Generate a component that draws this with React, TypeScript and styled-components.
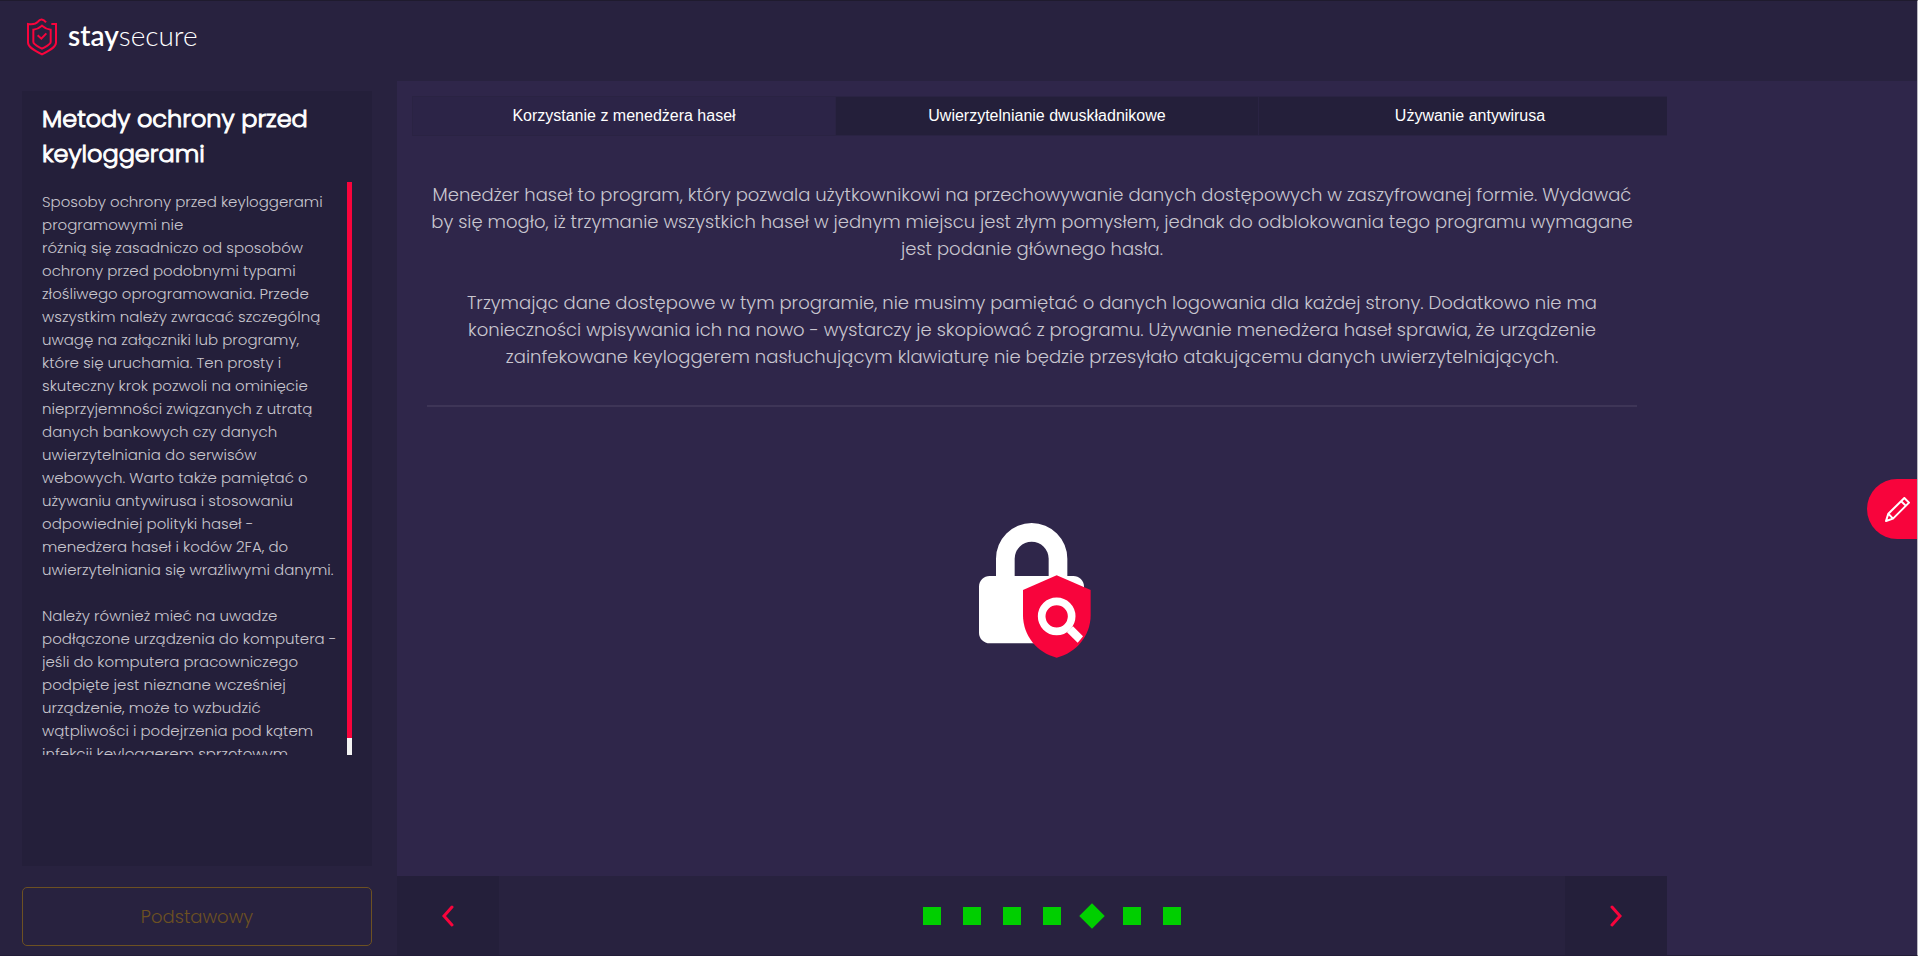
import React from 'react';
import styled, { createGlobalStyle } from 'styled-components';

const GlobalStyle = createGlobalStyle`
  *, *::before, *::after { box-sizing: border-box; }
  body { margin: 0; background: #2f264a; }
  button, ul, h1, h2, p { margin: 0; }
`;

const bodyFont = `Poppins, Inter, "Open Sans", sans-serif`;

const Page = styled.div`
  display: flex;
  flex-direction: column;
  height: 100vh;
  overflow: hidden;
  border-top: 1px solid #1f1b2e;
  border-right: 1px solid #b9b8c0;
  border-bottom: 1px solid #221c38;
  font-family: ${bodyFont};
  color: #fff;
`;

const Header = styled.header`
  flex: 0 0 80px;
  padding: 17px 26px;
  background: #28223f;
`;

const Brand = styled.a`
  display: inline-flex;
  align-items: flex-start;
  gap: 10px;
  color: #fff;
  text-decoration: none;
  font: 300 28px/34px Lato, sans-serif;

  b { font-weight: 600; }
`;

const Body = styled.div`
  flex: 1;
  display: flex;
  min-height: 0;
`;

const Sidebar = styled.aside`
  flex: 0 0 397px;
  display: flex;
  flex-direction: column;
  gap: 21px;
  padding: 10px 25px 9px 22px;
  background: #28223f;
`;

const Card = styled.section`
  flex: 1;
  min-height: 0;
  padding: 10px 20px 111px;
  background: #241f3a;
  display: flex;
  flex-direction: column;
  gap: 11px;
`;

const Title = styled.h1`
  font-size: 24px;
  line-height: 35px;
  font-weight: 300;
  -webkit-text-stroke: 1px #fff;
`;

const Scroller = styled.div`
  flex: 1;
  min-height: 0;
  display: flex;
  justify-content: space-between;
  overflow: hidden;
`;

const Description = styled.div`
  padding-top: 8px;
  font-size: 15px;
  line-height: 23px;
  font-weight: 300;
  color: #c8c6ce;
  white-space: pre;
`;

const Track = styled.div`
  flex: 0 0 5px;
  display: flex;
  flex-direction: column;
  background: #f3f3f3;
`;

const Thumb = styled.div`
  height: 97%;
  background: #f8043c;
`;

const LevelButton = styled.button`
  flex: 0 0 59px;
  border: 1px solid #6d5122;
  border-radius: 5px;
  background: transparent;
  color: #6d5122;
  font: 300 18px/27px ${bodyFont};
`;

const Main = styled.main`
  flex: 0 1 1270px;
  min-width: 0;
  display: flex;
  flex-direction: column;
`;

const TabWindow = styled.div`
  padding: 15px 0 0 15px;
  overflow: hidden;
`;

const TabList = styled.div`
  display: grid;
  grid-template-columns: repeat(3, 1fr);
  height: 40px;
  margin-right: -16px;
  border: 1px solid #2a2343;
`;

const Tab = styled.button<{ $active?: boolean }>`
  border: 0;
  border-right: 1px solid #2a2343;
  padding: 0;
  background: ${p => (p.$active ? '#2c2447' : '#241f3a')};
  color: #fff;
  font: 16px/20px "Liberation Sans", sans-serif;
`;

const Article = styled.article`
  flex: 1;
  min-height: 0;
  padding: 45px 30px 0;
  display: flex;
  flex-direction: column;
  align-items: center;
`;

const Copy = styled.div`
  font-size: 18px;
  line-height: 27px;
  font-weight: 300;
  color: #c9c6d0;
  text-align: center;
  white-space: pre;
`;

const Rule = styled.hr`
  width: 100%;
  height: 2px;
  margin: 35px 0 116px;
  border: 0;
  background: #3e3557;
`;

const Pager = styled.nav`
  flex: 0 0 79px;
  display: flex;
  background: #28223f;
`;

const Arrow = styled.button`
  flex: 0 0 102px;
  border: 0;
  padding: 0;
  background: #241f3a;
  display: flex;
  align-items: center;
  justify-content: center;
`;

const Steps = styled.ul`
  flex: 1;
  display: flex;
  align-items: center;
  justify-content: center;
  gap: 22px;
  padding: 0 0 0 40px;
  list-style: none;

  li { display: flex; }
`;

const Step = styled.button<{ $current?: boolean }>`
  width: 18px;
  height: 18px;
  padding: 0;
  border: 0;
  background: #00cf00;
  transform: ${p => (p.$current ? 'rotate(45deg)' : 'none')};
`;

const EditButton = styled.button`
  position: fixed;
  right: 1px;
  top: 50%;
  margin-top: 1px;
  width: 50px;
  height: 60px;
  padding: 0 7px 0 0;
  border: 0;
  border-radius: 30px 0 0 30px;
  background: #f8043c;
  display: flex;
  align-items: center;
  justify-content: flex-end;
`;

const description = `Sposoby ochrony przed keyloggerami
programowymi nie
różnią się zasadniczo od sposobów
ochrony przed podobnymi typami
złośliwego oprogramowania. Przede
wszystkim należy zwracać szczególną
uwagę na załączniki lub programy,
które się uruchamia. Ten prosty i
skuteczny krok pozwoli na ominięcie
nieprzyjemności związanych z utratą
danych bankowych czy danych
uwierzytelniania do serwisów
webowych. Warto także pamiętać o
używaniu antywirusa i stosowaniu
odpowiedniej polityki haseł -
menedżera haseł i kodów 2FA, do
uwierzytelniania się wrażliwymi danymi.

Należy również mieć na uwadze
podłączone urządzenia do komputera -
jeśli do komputera pracowniczego
podpięte jest nieznane wcześniej
urządzenie, może to wzbudzić
wątpliwości i podejrzenia pod kątem
infekcji keyloggerem sprzętowym.`;

const copy = `Menedżer haseł to program, który pozwala użytkownikowi na przechowywanie danych dostępowych w zaszyfrowanej formie. Wydawać
by się mogło, iż trzymanie wszystkich haseł w jednym miejscu jest złym pomysłem, jednak do odblokowania tego programu wymagane
jest podanie głównego hasła.

Trzymając dane dostępowe w tym programie, nie musimy pamiętać o danych logowania dla każdej strony. Dodatkowo nie ma
konieczności wpisywania ich na nowo - wystarczy je skopiować z programu. Używanie menedżera haseł sprawia, że urządzenie
zainfekowane keyloggerem nasłuchującym klawiaturę nie będzie przesyłało atakującemu danych uwierzytelniających.`;

const tabs = ['Korzystanie z menedżera haseł', 'Uwierzytelnianie dwuskładnikowe', 'Używanie antywirusa'];

const Logo = () => (
  <svg width="32" height="38" viewBox="0 0 96 114" fill="none" stroke="#f8043c" strokeWidth="6" aria-hidden="true">
    <path d="M76 18H90V74C90 88 66 100 48 109C30 100 6 88 6 74V18C20 20 30 18 36 11C42 2 52 2 60 13" />
    <path d="M48 23C40 30 32 34 22 35V72C22 80 38 86 48 92C58 86 74 80 74 72V35C64 34 56 30 48 23Z" />
    <path d="M35 52L46 62L61 46" />
  </svg>
);

const LockArt = () => (
  <svg width="118" height="135" viewBox="70 68 354 405" aria-hidden="true">
    <path fill="#fff" d="M139 227V175A107 107 0 0 1 353 175V227H371A32 32 0 0 1 403 259V397A32 32 0 0 1 371 429H120A32 32 0 0 1 88 397V259A32 32 0 0 1 120 227ZM195 227H297V175A51 51 0 0 0 195 175Z" />
    <path fill="#f8043c" d="M321 225L423 269V345C423 405 380 458 321 472C262 458 220 405 220 345V269Z" />
    <circle cx="321" cy="348" r="45" fill="none" stroke="#fff" strokeWidth="23" />
    <path fill="#fff" d="M352 396L370 378L400 408Q393 418 384 427Z" />
  </svg>
);

export default function App() {
  return (
    <>
      <GlobalStyle />
      <Page>
        <Header>
          <Brand href="#">
            <Logo />
            <span><b>stay</b>secure</span>
          </Brand>
        </Header>
        <Body>
          <Sidebar>
            <Card>
              <Title>Metody ochrony przed<br />keyloggerami</Title>
              <Scroller>
                <Description>{description}</Description>
                <Track><Thumb /></Track>
              </Scroller>
            </Card>
            <LevelButton type="button">Podstawowy</LevelButton>
          </Sidebar>
          <Main>
            <TabWindow>
              <TabList role="tablist">
                {tabs.map((label, i) => (
                  <Tab key={label} type="button" role="tab" aria-selected={i === 0} $active={i === 0}>{label}</Tab>
                ))}
              </TabList>
            </TabWindow>
            <Article>
              <Copy>{copy}</Copy>
              <Rule />
              <LockArt />
            </Article>
            <Pager aria-label="Slajdy">
              <Arrow type="button" aria-label="Poprzedni">
                <svg width="12" height="22" viewBox="0 0 12 22" fill="none" stroke="#f8043c" strokeWidth="3" strokeLinecap="round"><path d="M10 2L2 11L10 20" /></svg>
              </Arrow>
              <Steps>
                {[0, 1, 2, 3, 4, 5, 6].map(i => (
                  <li key={i}><Step type="button" aria-label={`Slajd ${i + 1}`} $current={i === 4} /></li>
                ))}
              </Steps>
              <Arrow type="button" aria-label="Następny">
                <svg width="12" height="22" viewBox="0 0 12 22" fill="none" stroke="#f8043c" strokeWidth="3" strokeLinecap="round"><path d="M2 2L10 11L2 20" /></svg>
              </Arrow>
            </Pager>
          </Main>
        </Body>
        <EditButton type="button" aria-label="Edytuj">
          <svg width="25" height="25" viewBox="0 0 75 75" fill="none" stroke="#fff" strokeWidth="6" strokeLinejoin="round">
            <path d="M3 72L10 50L58 3L72 17L24 65ZM10 50L24 65M48 12L62 26" />
          </svg>
        </EditButton>
      </Page>
    </>
  );
}
